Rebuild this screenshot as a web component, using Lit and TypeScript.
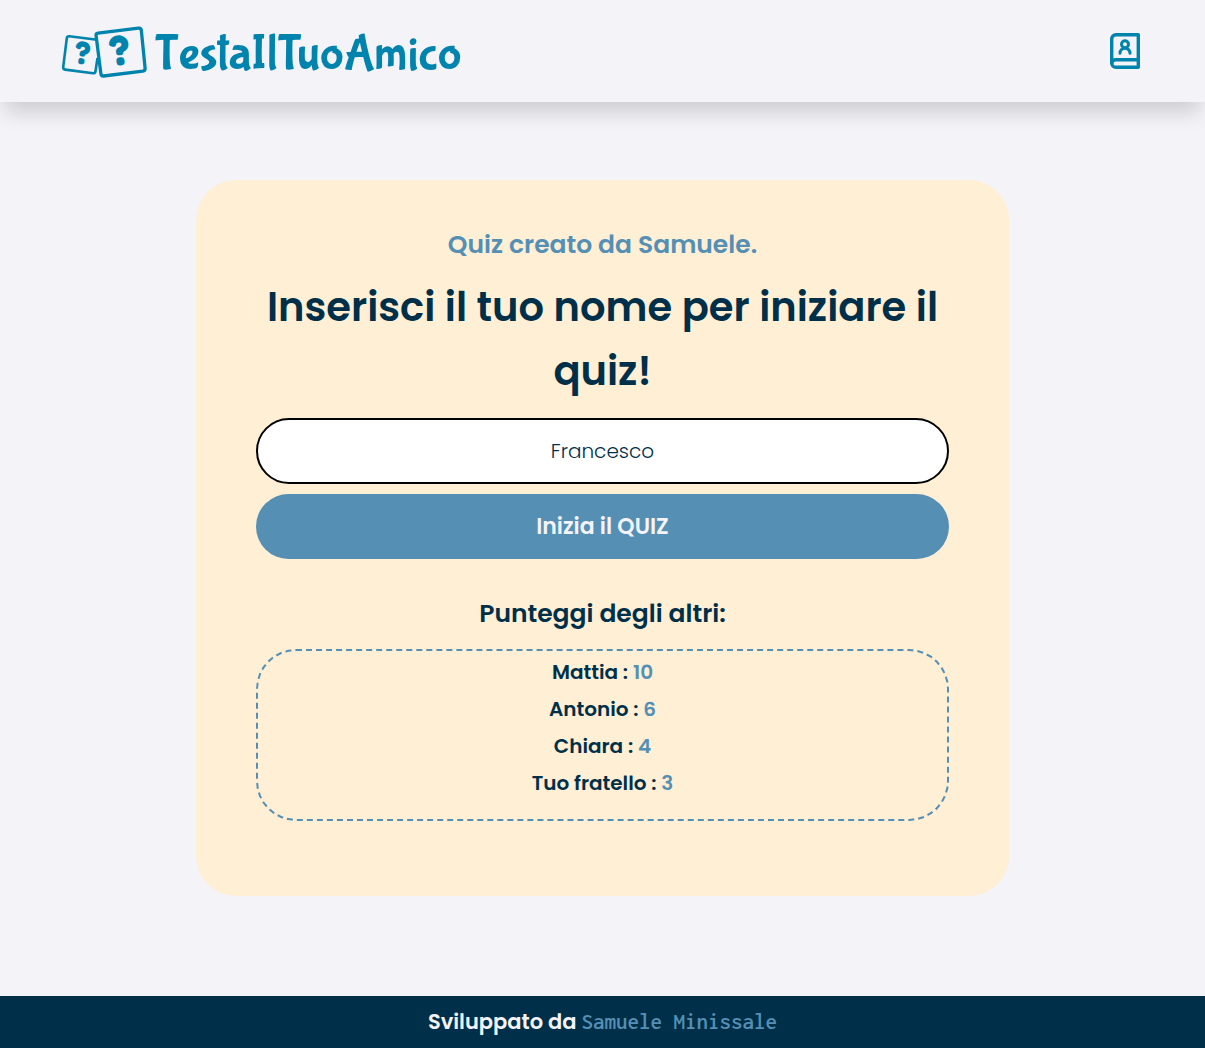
import { LitElement, html, css } from "lit";
import { customElement, state } from "lit/decorators.js";

interface Score {
  name: string;
  points: number;
}

@customElement("site-header")
class SiteHeader extends LitElement {
  static styles = css`
    :host {
      display: block;
    }
    .bar {
      box-sizing: border-box;
      min-height: 102px;
      padding: 0 60px;
      display: flex;
      align-items: center;
      justify-content: space-between;
      background: #f4f3f8;
      box-shadow: 0 15px 20px -5px rgba(0, 0, 0, 0.16);
      color: #0084ad;
    }
    .brand {
      display: flex;
      align-items: center;
      gap: 7px;
      color: inherit;
      text-decoration: none;
    }
    .cards {
      width: 88px;
      height: 54px;
      overflow: visible;
    }
    .mark {
      font-family: Fredoka, Nunito, Lato, sans-serif;
      font-weight: 700;
      text-anchor: middle;
      fill: currentColor;
    }
    .mark-small {
      font-size: 32px;
    }
    .mark-large {
      font-size: 42px;
    }
    .name {
      padding-top: 7px;
      font: 400 50px/60px "Bubblegum Sans", Lato, sans-serif;
    }
    .contacts {
      display: flex;
      padding: 0 4px;
      color: inherit;
    }
    .book {
      width: 32px;
      height: 38px;
    }
  `;

  render() {
    return html`
      <header class="bar">
        <a class="brand" href="#">
          <svg class="cards" viewBox="0 -1 88 54" fill="none" stroke="currentColor" stroke-linejoin="round" aria-hidden="true">
            <path d="M37 14.8 9.3 11.2Q7.1 11 6.8 13.2L3.2 42Q3 44.3 5.2 44.6L33 48.2Q35.2 48.4 35.5 46.2L37.5 33" stroke-width="2.6" />
            <path d="M38 8.2 78.4 3.1Q81 2.8 81.3 5.2L85.1 43.2Q85.4 45.8 82.8 46.2L43.6 51Q41.2 51.2 40.9 48.8L36.1 10.8Q35.8 8.5 38 8.2Z" stroke-width="3.3" />
            <g stroke="none">
              <text class="mark mark-small" transform="translate(21 39) rotate(7)">?</text>
              <text class="mark mark-large" transform="translate(61 40) rotate(-6)">?</text>
            </g>
          </svg>
          <span class="name">TestaIlTuoAmico</span>
        </a>
        <a class="contacts" href="#rubrica" aria-label="Rubrica">
          <svg class="book" viewBox="0 0 32 38" fill="none" stroke="currentColor" stroke-width="3.4" stroke-linecap="round" stroke-linejoin="round" aria-hidden="true">
            <path d="M29.3 2.7H7A4.3 4.3 0 0 0 2.7 7v24A4.3 4.3 0 0 0 7 35.3h22.3Z" />
            <path d="M2.7 31A4.2 4.2 0 0 1 7 27.8h22" />
            <circle cx="16" cy="12.2" r="3.5" stroke-width="3" />
            <path d="M11 21.2a5 5 0 0 1 10 0" stroke-width="3" />
          </svg>
        </a>
      </header>
    `;
  }
}

@customElement("score-list")
class ScoreList extends LitElement {
  @state() private scores: Score[] = [
    { name: "Mattia", points: 10 },
    { name: "Antonio", points: 6 },
    { name: "Chiara", points: 4 },
    { name: "Tuo fratello", points: 3 },
  ];

  static styles = css`
    :host {
      display: block;
    }
    .list {
      margin: 0;
      padding: 5px 20px 20px;
      list-style: none;
      display: flex;
      flex-direction: column;
      gap: 5px;
      border: 2px dashed #558fb4;
      border-radius: 40px;
      text-align: center;
      font-size: 20px;
      line-height: 32px;
      font-weight: 600;
    }
    .points {
      color: #558fb4;
    }
  `;

  render() {
    return html`
      <ul class="list">
        ${this.scores.map(
          (s) => html`<li>${s.name} : <span class="points">${s.points}</span></li>`
        )}
      </ul>
    `;
  }
}

@customElement("quiz-card")
class QuizCard extends LitElement {
  static styles = css`
    :host {
      display: block;
      width: 100%;
      max-width: 813px;
    }
    .card {
      padding: 45px 60px 75px;
      border-radius: 40px;
      background: #feefd5;
      text-align: center;
    }
    .author,
    .title,
    .subtitle {
      margin: 0;
      font-weight: 600;
    }
    .author,
    .subtitle {
      font-size: 25px;
      line-height: 40px;
    }
    .author {
      color: #558fb4;
    }
    .title {
      margin-top: 10px;
      font-size: 40px;
      line-height: 64px;
    }
    .form {
      margin: 15px 0 35px;
      display: flex;
      flex-direction: column;
      gap: 10px;
    }
    .field,
    .start {
      box-sizing: border-box;
      width: 100%;
      border-radius: 40px;
      text-align: center;
      font-family: inherit;
    }
    .field {
      height: 66px;
      padding: 0 30px;
      border: 2px solid #000;
      background: #fff;
      color: #002f49;
      font-size: 20px;
      font-weight: 300;
    }
    .start {
      height: 65px;
      border: 0;
      background: #558fb4;
      color: #f4f3f8;
      font-size: 22px;
      font-weight: 600;
      cursor: pointer;
    }
    .subtitle {
      margin-bottom: 15px;
    }
  `;

  render() {
    return html`
      <section class="card">
        <p class="author">Quiz creato da Samuele.</p>
        <h1 class="title">
          <label for="player">Inserisci il tuo nome per iniziare il quiz!</label>
        </h1>
        <form class="form" @submit=${(e: Event) => e.preventDefault()}>
          <input class="field" id="player" type="text" value="Francesco" />
          <button class="start" type="submit">Inizia il QUIZ</button>
        </form>
        <h2 class="subtitle">Punteggi degli altri:</h2>
        <score-list></score-list>
      </section>
    `;
  }
}

@customElement("app-root")
class AppRoot extends LitElement {
  static styles = css`
    :host {
      display: flex;
      flex-direction: column;
      min-height: 100vh;
      background: #f4f3f8;
      color: #002f49;
      font-family: Poppins, Inter, "Open Sans", sans-serif;
    }
    .content {
      flex: 1;
      display: flex;
      justify-content: center;
      align-items: flex-start;
      padding: 78px 20px 100px;
    }
    .footer {
      padding: 10px 20px;
      background: #002f49;
      color: #f4f3f8;
      text-align: center;
      font-size: 21px;
      line-height: 32px;
      font-weight: 600;
    }
    .developer {
      color: #558fb4;
      font-family: Inconsolata, "DejaVu Sans Mono", monospace;
      font-size: 23px;
      font-weight: 600;
      line-height: 1;
      text-decoration: none;
    }
  `;

  render() {
    return html`
      <site-header></site-header>
      <main class="content"><quiz-card></quiz-card></main>
      <footer class="footer">
        Sviluppato da <a class="developer" href="#autore">Samuele Minissale</a>
      </footer>
    `;
  }
}
